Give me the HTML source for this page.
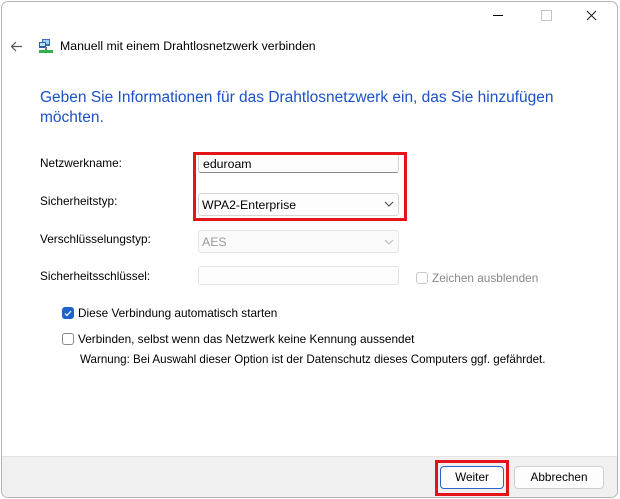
<html><head><style>
body{margin:0;width:620px;height:499px;background:#fff;font-family:"Liberation Sans",sans-serif;font-size:11.8px;color:#000;position:relative;overflow:hidden}
.a{position:absolute;white-space:nowrap}
.win{position:absolute;left:1px;top:1px;width:615px;height:495px;border:1px solid #b5b5b5;border-radius:7px;overflow:hidden;background:#fff}
.box{position:absolute;border:1px solid #d5d5d5;border-radius:3px;background:#fdfdfd;box-sizing:border-box}
.cb{position:absolute;width:12px;height:12px;border:1px solid #8a8a8a;border-radius:3px;box-sizing:border-box;background:#fff}
.red{position:absolute;border:3px solid #e3151a;box-sizing:border-box}
.btn{position:absolute;border:1px solid #cfcfcf;border-radius:4px;background:#fdfdfd;box-sizing:border-box;text-align:center;line-height:20px}
</style></head><body>
<div class="win">
<div style="position:absolute;left:0;top:454px;width:100%;height:45px;background:#f0f0f0;border-top:1px solid #e5e5e5"></div>
</div>
<div class="a" style="width:10px;height:1px;background:#000;top:15px;left:493px"></div>
<div class="a" style="left:541px;top:10px;width:9px;height:9px;border:1px solid #c4c4c4"></div>
<svg class="a" style="left:586px;top:10px" width="11" height="11"><path d="M1 1L10 10M10 1L1 10" stroke="#222" stroke-width="1.1"/></svg>
<svg class="a" style="left:10px;top:41px" width="13" height="11"><path d="M1 5.5H12M6 1L1.5 5.5L6 10" stroke="#555" fill="none" stroke-width="1.2"/></svg>
<svg class="a" style="left:38px;top:38px" width="16" height="16"><rect x="4" y="1" width="8" height="7" fill="#3a6fc0"/><rect x="5" y="2" width="6" height="4" fill="#9fd0f5"/><rect x="1" y="4" width="7" height="6" fill="#2f5ea8"/><rect x="2" y="5" width="5" height="3" fill="#bfe3ff"/><rect x="1" y="12" width="14" height="3" fill="#2fb34a"/><rect x="7" y="9" width="2" height="3" fill="#777"/></svg>
<div class="a" style="left:60px;top:39px;font-size:12.3px">Manuell mit einem Drahtlosnetzwerk verbinden</div>
<div class="a" style="left:40px;top:88px;font-size:15.5px;color:#1a52c5;line-height:20px">Geben Sie Informationen für das Drahtlosnetzwerk ein, das Sie hinzufügen<br>möchten.</div>
<div class="a" style="left:40px;top:156px">Netzwerkname:</div>
<div class="a" style="left:40px;top:194px">Sicherheitstyp:</div>
<div class="a" style="left:40px;top:232px">Verschlüsselungstyp:</div>
<div class="a" style="left:40px;top:269px">Sicherheitsschlüssel:</div>
<div class="box" style="left:198px;top:153px;width:201px;height:20px;border-bottom:1px solid #888"></div>
<div class="a" style="left:203px;top:157px;font-size:12.3px">eduroam</div>
<div class="box" style="left:198px;top:193px;width:201px;height:23px"></div>
<div class="a" style="left:202px;top:198px;font-size:12.3px">WPA2-Enterprise</div>
<svg class="a" style="left:384px;top:201px" width="10" height="6"><path d="M1 1L5 5L9 1" stroke="#444" fill="none"/></svg>
<div class="red" style="left:193px;top:152px;width:214px;height:69px"></div>
<div class="box" style="left:198px;top:230px;width:201px;height:23px;background:#fafafa;border-color:#e6e6e6"></div>
<div class="a" style="left:202px;top:235px;color:#9a9a9a;font-size:12.3px">AES</div>
<svg class="a" style="left:384px;top:239px" width="10" height="6"><path d="M1 1L5 5L9 1" stroke="#bbb" fill="none"/></svg>
<div class="box" style="left:198px;top:266px;width:201px;height:19px;border-color:#e3e3e3"></div>
<div class="cb" style="left:416px;top:272px;border-color:#c8c8c8"></div>
<div class="a" style="left:432px;top:271px;color:#888">Zeichen ausblenden</div>
<div class="cb" style="left:62px;top:307px;background:#1f62c9;border-color:#1f62c9"></div>
<svg class="a" style="left:64px;top:310px" width="8" height="7"><path d="M1 3.5L3 5.5L7 1" stroke="#fff" fill="none" stroke-width="1.2"/></svg>
<div class="a" style="left:78px;top:306px">Diese Verbindung automatisch starten</div>
<div class="cb" style="left:62px;top:333px"></div>
<div class="a" style="left:78px;top:332px">Verbinden, selbst wenn das Netzwerk keine Kennung aussendet</div>
<div class="a" style="left:80px;top:353px;font-size:11.6px">Warnung: Bei Auswahl dieser Option ist der Datenschutz dieses Computers ggf. gefährdet.</div>
<div class="btn" style="left:440px;top:466px;width:64px;height:23px;border-color:#2566c8;line-height:21px">Weiter</div>
<div class="red" style="left:435px;top:460px;width:74px;height:36px"></div>
<div class="btn" style="left:514px;top:466px;width:90px;height:23px;line-height:21px">Abbrechen</div>
</body></html>
